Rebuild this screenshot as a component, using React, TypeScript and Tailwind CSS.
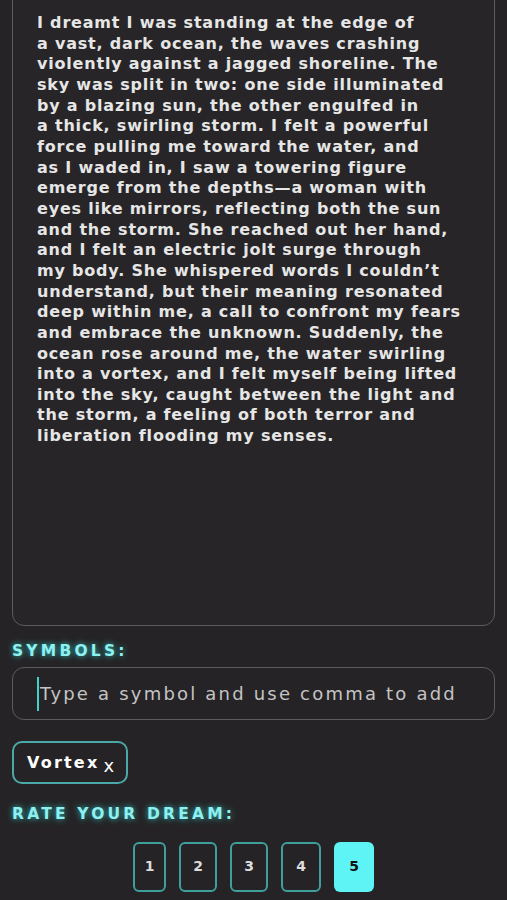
import { useState } from 'react'

const dreamLines = [
  'I dreamt I was standing at the edge of',
  'a vast, dark ocean, the waves crashing',
  'violently against a jagged shoreline. The',
  'sky was split in two: one side illuminated',
  'by a blazing sun, the other engulfed in',
  'a thick, swirling storm. I felt a powerful',
  'force pulling me toward the water, and',
  'as I waded in, I saw a towering figure',
  'emerge from the depths\u2014a woman with',
  'eyes like mirrors, reflecting both the sun',
  'and the storm. She reached out her hand,',
  'and I felt an electric jolt surge through',
  'my body. She whispered words I couldn\u2019t',
  'understand, but their meaning resonated',
  'deep within me, a call to confront my fears',
  'and embrace the unknown. Suddenly, the',
  'ocean rose around me, the water swirling',
  'into a vortex, and I felt myself being lifted',
  'into the sky, caught between the light and',
  'the storm, a feeling of both terror and',
  'liberation flooding my senses.',
]

const ratingWidths = ['w-[33px]', 'w-[38px]', 'w-[38px]', 'w-[40px]', 'w-[40px]']

const font = { fontFamily: '"DejaVu Sans", "Liberation Sans", sans-serif' }

export default function App() {
  const [rating, setRating] = useState(5)
  const [symbols, setSymbols] = useState(['Vortex'])

  return (
    <div className="min-h-screen w-[507px] bg-[#252325] text-[#e6e6e6] overflow-hidden" style={font}>
      <div className="px-3">
        {/* dream text, scrolled so the top border is out of view */}
        <div className="-mt-4 h-[642px] rounded-xl border border-[#5c5b5d] bg-[#272527] pl-6 pr-2 pt-[28px]">
          <div className="text-[16px] font-semibold leading-[20.65px] tracking-[0.8px]">
            {dreamLines.map((line, i) => (
              <div key={i} className="whitespace-nowrap">{line}</div>
            ))}
          </div>
        </div>

        <h2 className="mt-[14px] text-[15.5px] font-extrabold tracking-[3.2px] text-[#8ff0f0] [text-shadow:0_0_6px_#2fc7c9]">
          SYMBOLS:
        </h2>

        <div className="mt-[4px] flex h-[53px] items-center rounded-xl border border-[#5c5b5d] pl-6">
          <span className="h-[34px] w-[2px] bg-[#3fd3cc]" />
          <span className="ml-[1px] whitespace-nowrap text-[18px] tracking-[2.2px] text-[#c4c4c4]">Type a symbol and use comma to add</span>
        </div>

        <div className="mt-[21px] flex gap-2">
          {symbols.map((s) => (
            <button
              key={s}
              onClick={() => setSymbols(symbols.filter((x) => x !== s))}
              className="flex h-[43px] items-center rounded-[10px] border-2 border-[#4aa9a8] pl-[13px] pr-[12px] text-[16px] font-bold tracking-[2.2px] text-white"
            >
              {s}
              <span className="ml-[4px] mt-[6px] text-[18px] font-normal tracking-normal">x</span>
            </button>
          ))}
        </div>

        <h2 className="mt-[19px] text-[15.5px] font-extrabold tracking-[3.2px] text-[#8ff0f0] [text-shadow:0_0_6px_#2fc7c9]">
          RATE YOUR DREAM:
        </h2>

        <div className="mt-[15px] flex justify-center gap-[13px]">
          {[1, 2, 3, 4, 5].map((n, i) => (
            <button
              key={n}
              onClick={() => setRating(n)}
              className={
                n === rating
                  ? `flex h-[50px] ${ratingWidths[i]} items-center justify-center rounded-md bg-[#5ef3f5] text-[14px] font-bold text-[#111]`
                  : `flex h-[50px] ${ratingWidths[i]} items-center justify-center rounded-md border-2 border-[#3f9f9c] text-[14px] font-bold text-[#dcdcdc]`
              }
            >
              {n}
            </button>
          ))}
        </div>
      </div>
    </div>
  )
}
